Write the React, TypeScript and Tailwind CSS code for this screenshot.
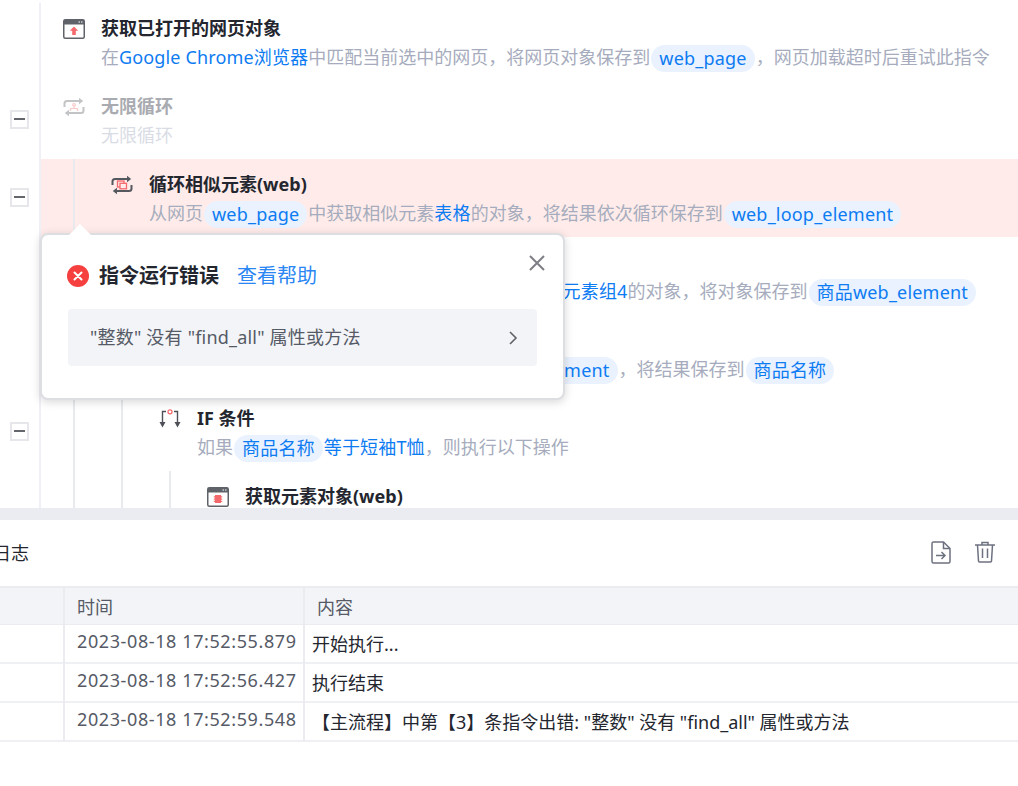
import type { ReactNode } from "react";

const font = { fontFamily: '"Noto Sans", "Noto Sans CJK SC", sans-serif' };

const Blue = ({ children }: { children: ReactNode }) => <span className="tracking-[0.15px] text-[#0d7bf2]">{children}</span>;

const Pill = ({ children }: { children: ReactNode }) => (
  <span className="mx-px inline-block h-[27px] -translate-y-px rounded-full bg-[#e9f2fe] px-2 align-middle text-[18px] leading-[27px] tracking-[0.2px] text-[#0d7bf2]">
    {children}
  </span>
);

const WindowIcon = ({ kind }: { kind: "up" | "chip" }) => (
  <svg width="22" height="20" viewBox="0 0 22 20" fill="none">
    <rect x="0.75" y="0.75" width="20.5" height="18.5" rx="1.5" fill="#fff" stroke="#5f6269" strokeWidth="1.5" />
    <path d="M1 1h20v4.500H1z" fill="#5f6269" />
    <path d="M15.500 3h1.500M18 3h1.500" stroke="#fff" strokeWidth="1" />
    {kind === "up" ? (
      <path d="M11 7.500l4.200 4.200h-2.400V16H9.200v-4.300H6.800z" fill="#f4696b" />
    ) : (
      <path d="M8 8h6v1.200h1.200v1.300H14v1h1.200v1.300H14v1h1.200v1.200H14V16H8v-1H6.800v-1.200H8v-1H6.800v-1.300H8v-1H6.800V9.200H8z" fill="#f4696b" />
    )}
  </svg>
);

const LoopIcon = ({ faded, similar }: { faded?: boolean; similar?: boolean }) => (
  <svg width="22" height="20" viewBox="0 0 22 20" fill="none" className={faded ? "opacity-35" : ""}>
    <path d="M1.500 10V6.500C1.500 5.100 2.500 4 4 4h15" stroke="#55585f" strokeWidth="2" />
    <path d="M16 0.800l4.200 3.200-4.200 3.200z" fill="#55585f" />
    <path d="M20.500 10v3.500c0 1.400-1 2.500-2.500 2.500H3" stroke="#55585f" strokeWidth="2" />
    <path d="M6 12.800L1.800 16 6 19.200z" fill="#55585f" />
    {similar ? (
      <>
        <rect x="6.500" y="6" width="6.500" height="6" stroke="#f4696b" strokeWidth="1.300" />
        <rect x="9" y="8.300" width="6.500" height="5.500" fill="#ffecea" stroke="#f4696b" strokeWidth="1.300" />
      </>
    ) : (
      <path d="M11 6.500a1.300 1.300 0 110 2.600 1.300 1.300 0 010-2.600zM11 9v2M7.500 14v-2.500h7V14" stroke="#f4696b" strokeWidth="1.200" />
    )}
  </svg>
);

const IfIcon = () => (
  <svg width="22" height="20" viewBox="0 0 22 20" fill="none">
    <path d="M3.500 14V2.500h3.500M18.500 14V2.500H15" stroke="#4d5057" strokeWidth="1.400" />
    <path d="M0.500 13h6L3.500 18.500zM15.500 13h6L18.500 18.500z" fill="#4d5057" />
    <circle cx="11" cy="2.800" r="2" fill="#fff" stroke="#f4696b" strokeWidth="1.300" />
  </svg>
);

type Row = {
  level: number;
  icon: ReactNode;
  title: string;
  sub: ReactNode;
  collapse?: boolean;
  error?: boolean;
  faded?: boolean;
};

const rows: Row[] = [
  {
    level: 0,
    icon: <WindowIcon kind="up" />,
    title: "获取已打开的网页对象",
    sub: (
      <>
        在<Blue>Google Chrome浏览器</Blue>中匹配当前选中的网页，将网页对象保存到<Pill>web_page</Pill>，网页加载超时后重试此指令
      </>
    ),
  },
  {
    level: 0,
    icon: <LoopIcon faded />,
    title: "无限循环",
    sub: "无限循环",
    collapse: true,
    faded: true,
  },
  {
    level: 1,
    icon: <LoopIcon similar />,
    title: "循环相似元素(web)",
    sub: (
      <>
        从网页<Pill>web_page</Pill>中获取相似元素<Blue>表格</Blue>的对象，将结果依次循环保存到<Pill>web_loop_element</Pill>
      </>
    ),
    collapse: true,
    error: true,
  },
  {
    level: 2,
    icon: <WindowIcon kind="chip" />,
    title: "获取元素对象(web)",
    sub: (
      <>
        在<Pill>web_loop_element</Pill>中获取相似元素组中
        <span className="ml-[6px]">
          <Blue>元素组4</Blue>
        </span>
        的对象，将对象保存到<Pill>商品web_element</Pill>
      </>
    ),
  },
  {
    level: 2,
    icon: <WindowIcon kind="chip" />,
    title: "获取元素信息(web)",
    sub: (
      <>
        获取元素的文本内容，目标元素<Pill>商品web_element</Pill>，将结果保存到<Pill>商品名称</Pill>
      </>
    ),
  },
  {
    level: 2,
    icon: <IfIcon />,
    title: "IF 条件",
    sub: (
      <>
        如果<Pill>商品名称</Pill>
        <Blue>等于短袖T恤</Blue>，则执行以下操作
      </>
    ),
    collapse: true,
  },
  {
    level: 3,
    icon: <WindowIcon kind="chip" />,
    title: "获取元素对象(web)",
    sub: "在网页中获取元素对象",
  },
];

const TreeRow = ({ row }: { row: Row }) => (
  <div className="flex h-[78px]">
    <div className="flex w-[41px] shrink-0 items-center border-r-2 border-[#eef0f5] pb-[2px] pl-[10px]">
      {row.collapse && (
        <div className="flex h-[19px] w-[19px] items-center justify-center border-2 border-[#e6e7eb] bg-white">
          <div className="h-[2px] w-[11px] bg-[#63666d]" />
        </div>
      )}
    </div>
    <div className={`flex min-w-0 flex-1 ${row.error ? "bg-[#ffecea]" : ""}`}>
      {Array.from({ length: row.level }).map((_, i) => (
        <div key={i} className="ml-8 w-4 shrink-0 border-l-2 border-[#e9eaee]" />
      ))}
      <div className="flex min-w-0 flex-1 pl-[22px]">
        <div className="w-[38px] shrink-0 pt-[16px]">{row.icon}</div>
        <div className="min-w-0 pt-[11px] whitespace-nowrap">
          <div className={`h-[29px] text-[18px] leading-[28px] font-bold ${row.faded ? "text-[#a9abb1]" : "text-[#23262e]"}`}>
            {row.title}
          </div>
          <div className={`h-[28px] text-[18px] leading-[28px] ${row.faded ? "text-[#d9dce5]" : "text-[#a6acbd]"}`}>
            {row.sub}
          </div>
        </div>
      </div>
    </div>
  </div>
);

const ErrorPopover = () => (
  <div className="absolute top-[233px] left-[40px] h-[167px] w-[525px] rounded-lg border-2 border-[#dcdee2] bg-white shadow-[0_2px_10px_rgba(0,0,0,0.16)]">
    <div className="absolute -top-[11px] left-[27px] h-0 w-0 border-x-[11px] border-b-[11px] border-x-transparent border-b-white" />
    <div className="flex items-center pt-[27px] pl-[25px]">
      <svg width="22" height="22" viewBox="0 0 22 22">
        <circle cx="11" cy="11" r="11" fill="#f5403f" />
        <path d="M7.500 7.500l7 7M14.500 7.500l-7 7" stroke="#fff" strokeWidth="2" strokeLinecap="round" />
      </svg>
      <span className="ml-[10px] text-[20px] leading-[28px] font-bold text-[#23262e]">指令运行错误</span>
      <span className="ml-[18px] text-[20px] leading-[28px] text-[#2a86f3]">查看帮助</span>
      <svg className="absolute top-[19px] right-[17px]" width="18" height="18" viewBox="0 0 18 18" fill="none">
        <path d="M2 2l14 14M16 2L2 16" stroke="#7d7f85" strokeWidth="2" />
      </svg>
    </div>
    <div className="mx-[26px] mt-[19px] flex h-[57px] items-center justify-between rounded bg-[#f3f4f7] pr-[19px] pl-[22px] text-[18px] tracking-[0.2px] text-[#555a66]">
      <span>"整数" 没有 "find_all" 属性或方法</span>
      <svg width="10" height="16" viewBox="0 0 10 16" fill="none">
        <path d="M2 2l6 6-6 6" stroke="#5f6269" strokeWidth="1.600" />
      </svg>
    </div>
  </div>
);

const logs = [
  ["2023-08-18 17:52:55.879", "开始执行..."],
  ["2023-08-18 17:52:56.427", "执行结束"],
  ["2023-08-18 17:52:59.548", '【主流程】中第【3】条指令出错: "整数" 没有 "find_all" 属性或方法'],
];

const LogPanel = () => (
  <div>
    <div className="flex h-[66px] items-center justify-between pr-[23px]">
      <span className="-ml-[43px] text-[18px] text-[#23262e]">运行日志</span>
      <div className="-mt-[2px] flex items-center gap-[24px]">
        <svg width="20" height="23" viewBox="0 0 20 23" fill="none" stroke="#6d7280" strokeWidth="1.500">
          <path d="M12.500 1H2.500A1.500 1.500 0 001 2.500v18A1.500 1.500 0 002.500 22h15a1.500 1.500 0 001.500-1.500V7.500z" />
          <path d="M12.500 1v6.500H19M5 14.500h9M10.500 11l3.500 3.500-3.500 3.500" />
        </svg>
        <svg width="20" height="22" viewBox="0 0 20 22" fill="none" stroke="#6d7280" strokeWidth="1.500">
          <path d="M0 4h20M7 3.500V1.500h6v2M2.500 4l1 16a1 1 0 001 1h11a1 1 0 001-1l1-16M7.500 7.500v9.500M12.500 7.500v9.500" />
        </svg>
      </div>
    </div>
    <div className="grid h-[39px] grid-cols-[65px_240px_1fr] border-t-2 border-b border-[#ebecf0] bg-[#f3f4f7] text-[18px] leading-[38px] text-[#555a66]">
      <div className="border-r-2 border-[#ebecf0]" />
      <div className="border-r-2 border-[#ebecf0] pl-[12px]">时间</div>
      <div className="pl-[12px]">内容</div>
    </div>
    {logs.map(([time, text]) => (
      <div key={time} className="grid h-[39px] grid-cols-[65px_240px_1fr] border-b-2 border-[#eff0f4] text-[18px]">
        <div className="border-r-2 border-[#ebecf0]" />
        <div className="border-r-2 border-[#ebecf0] pl-[12px] leading-[32px] tracking-[0.6px] whitespace-nowrap text-[#555a66]">{time}</div>
        <div className="pl-[7px] leading-[39px] whitespace-nowrap text-[#23262e]">{text}</div>
      </div>
    ))}
  </div>
);

export default function App() {
  return (
    <div className="h-[786px] w-full overflow-hidden bg-white" style={font}>
      <div className="relative h-[508px] overflow-hidden pt-[3px]">
        {rows.map((row, i) => (
          <TreeRow key={i} row={row} />
        ))}
        <ErrorPopover />
      </div>
      <div className="h-[12px] bg-[#ebecf1]" />
      <LogPanel />
    </div>
  );
}
